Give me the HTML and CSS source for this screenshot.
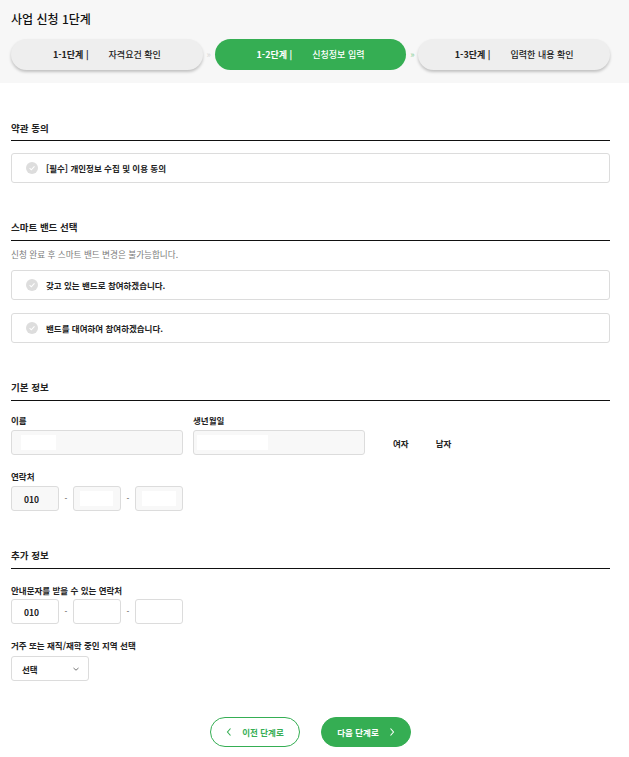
FILE: index.html
```html
<!DOCTYPE html>
<html lang="ko">
<head>
  <meta charset="UTF-8" />
  <meta name="viewport" content="width=device-width, initial-scale=1" />
  <title>사업 신청 1단계</title>
  <link rel="stylesheet" href="styles.css">
</head>
<body>
  <!-- Header with step indicator -->
  <header class="page-head">
    <h1>사업 신청 1단계</h1>
    <ol class="steps">
      <li class="step"><b>1-1단계 |</b><span>자격요건 확인</span></li>
      <li class="step-arrow">»</li>
      <li class="step active"><b>1-2단계 |</b><span>신청정보 입력</span></li>
      <li class="step-arrow on">»</li>
      <li class="step"><b>1-3단계 |</b><span>입력한 내용 확인</span></li>
    </ol>
  </header>

  <main class="content">
    <!-- 약관 동의 -->
    <section class="block">
      <h2>약관 동의</h2>
      <label class="check-box first">
        <span class="check-icon"><svg viewBox="0 0 12 12"><path d="M3.6 6.2l1.7 1.6 3.2-3.4" /></svg></span>
        [필수] 개인정보 수집 및 이용 동의
      </label>
    </section>

    <!-- 스마트 밴드 선택 -->
    <section class="block">
      <h2>스마트 밴드 선택</h2>
      <p class="note">신청 완료 후 스마트 밴드 변경은 불가능합니다.</p>
      <label class="check-box">
        <span class="check-icon"><svg viewBox="0 0 12 12"><path d="M3.6 6.2l1.7 1.6 3.2-3.4" /></svg></span>
        갖고 있는 밴드로 참여하겠습니다.
      </label>
      <label class="check-box">
        <span class="check-icon"><svg viewBox="0 0 12 12"><path d="M3.6 6.2l1.7 1.6 3.2-3.4" /></svg></span>
        밴드를 대여하여 참여하겠습니다.
      </label>
    </section>

    <!-- 기본 정보 -->
    <section class="block">
      <h2>기본 정보</h2>
      <div class="row">
        <div class="field">
          <div class="label">이름</div>
          <div class="input wide filled"><span class="mask" style="width:35px"></span></div>
        </div>
        <div class="field">
          <div class="label">생년월일</div>
          <div class="input wide filled tight-left"><span class="mask" style="width:71px"></span></div>
        </div>
        <div class="gender">
          <span>여자</span>
          <span>남자</span>
        </div>
      </div>
      <div class="label">연락처</div>
      <div class="phone">
        <div class="input small filled">010</div>
        <span class="dash">-</span>
        <div class="input small filled"><span class="mask" style="width:33px"></span></div>
        <span class="dash">-</span>
        <div class="input small filled"><span class="mask" style="width:34px"></span></div>
      </div>
    </section>

    <!-- 추가 정보 -->
    <section class="block">
      <h2>추가 정보</h2>
      <div class="label">안내문자를 받을 수 있는 연락처</div>
      <div class="phone tight">
        <div class="input small">010</div>
        <span class="dash">-</span>
        <div class="input small"></div>
        <span class="dash">-</span>
        <div class="input small"></div>
      </div>
      <div class="label">거주 또는 재직/재학 중인 지역 선택</div>
      <div class="select">
        선택
        <svg viewBox="0 0 8 6"><path d="M1.5 2l2.5 2.2 2.5-2.2" /></svg>
      </div>
    </section>

    <div class="actions">
      <button class="btn prev"><svg viewBox="0 0 6 10"><path d="M4.5 1.5L1.5 5l3 3.5" /></svg>이전 단계로</button>
      <button class="btn next">다음 단계로<svg viewBox="0 0 6 10"><path d="M1.5 1.5L4.5 5l-3 3.5" /></svg></button>
    </div>
  </main>
</body>
</html>
```

FILE: styles.css
```css
* {
  box-sizing: border-box;
}
body {
  margin: 0;
  font-family: 'Noto Sans CJK KR', 'Noto Sans', sans-serif;
  color: #222;
  background: #fff;
}

/* Header */
.page-head {
  background: #f7f7f7;
  padding: 10px 19px 13px 11px;
}
h1 {
  margin: 0;
  font-size: 12px;
  line-height: 18px;
  font-weight: 500;
  color: #111;
}
.steps {
  list-style: none;
  margin: 11px 0 0;
  padding: 0;
  display: flex;
  align-items: center;
}
.step {
  flex: 1;
  height: 31px;
  border-radius: 16px;
  background: #eeeeee;
  box-shadow: 0 2px 3px rgba(0, 0, 0, 0.22);
  display: flex;
  justify-content: center;
  align-items: center;
  font-size: 9px;
  color: #222;
}
.step b {
  font-weight: 700;
  margin-right: 20px;
}
.step span {
  font-weight: 500;
}
.step.active {
  background: #35ae53;
  color: #fff;
  box-shadow: none;
}
.step-arrow {
  width: 12px;
  text-align: center;
  font-size: 9px;
  color: #d6d6d6;
}
.step-arrow.on {
  color: #8ccf9a;
}

/* Content */
.content {
  padding: 0 19px 40px 11px;
}
.block {
  margin-top: 37px;
}
.block:first-child {
  margin-top: 38px;
}
h2 {
  margin: 0;
  font-size: 9.5px;
  line-height: 14px;
  font-weight: 700;
  padding-bottom: 6px;
  border-bottom: 1px solid #111;
}
.block:first-child h2 {
  padding-bottom: 5px;
}
.note {
  margin: 7px 0 0;
  font-size: 8.6px;
  line-height: 12px;
  color: #7a7a7a;
}

/* Checkbox rows */
.check-box {
  display: flex;
  align-items: center;
  height: 30px;
  margin-top: 13px;
  padding-left: 14px;
  border: 1px solid #dcdcdc;
  border-radius: 3px;
  font-size: 8.5px;
  font-weight: 700;
  color: #222;
}
.check-box.first {
  margin-top: 12px;
}
.note + .check-box {
  margin-top: 10px;
}
.check-icon {
  width: 12px;
  height: 12px;
  border-radius: 50%;
  background: #dddddd;
  margin-right: 8px;
  display: flex;
}
.check-icon svg {
  width: 12px;
  height: 12px;
  fill: none;
  stroke: #fff;
  stroke-width: 1.1;
}

/* Form fields */
.row {
  display: flex;
  align-items: flex-end;
}
.field {
  width: 172px;
  margin-right: 10px;
}
.label {
  margin-top: 15px;
  font-size: 8.5px;
  line-height: 12px;
  font-weight: 700;
  color: #222;
}
.row .label {
  margin-top: 13px;
}
.input {
  height: 25px;
  margin-top: 4px;
  border: 1px solid #dcdcdc;
  border-radius: 3px;
  background: #fff;
  display: flex;
  align-items: center;
  font-size: 8.5px;
  font-weight: 700;
}
.input.filled {
  background: #f8f8f8;
}
.input.wide {
  width: 172px;
  padding-left: 9px;
}
.input.wide.tight-left {
  padding-left: 3px;
}
.input.small {
  width: 48px;
  padding-left: 12px;
}
.phone .input.small .mask {
  margin-left: -6px;
}
.mask {
  display: block;
  height: 15px;
  background: #fff;
}
.gender {
  display: flex;
  height: 25px;
  align-items: center;
  margin-left: 18px;
  font-size: 8.5px;
  font-weight: 700;
}
.gender span {
  margin-right: 27px;
}
.phone {
  display: flex;
  align-items: center;
}
.phone.tight .input {
  margin-top: 3px;
}
.phone .input {
  margin-top: 4px;
}
.dash {
  width: 14px;
  text-align: center;
  font-size: 8px;
  color: #444;
  padding-top: 3px;
}
.select {
  width: 78px;
  height: 25px;
  margin-top: 5px;
  border: 1px solid #dcdcdc;
  border-radius: 3px;
  display: flex;
  align-items: center;
  justify-content: space-between;
  padding: 0 8px 0 10px;
  font-size: 8.5px;
  font-weight: 700;
}
.select svg {
  width: 8px;
  height: 6px;
  fill: none;
  stroke: #666;
  stroke-width: 0.9;
}

/* Bottom buttons */
.actions {
  display: flex;
  justify-content: center;
  gap: 21px;
  margin-top: 36px;
}
.btn {
  width: 90px;
  height: 30px;
  border-radius: 15px;
  font-family: inherit;
  font-size: 8.5px;
  font-weight: 700;
  display: flex;
  align-items: center;
  justify-content: center;
  cursor: pointer;
}
.btn svg {
  width: 6px;
  height: 10px;
  fill: none;
  stroke-width: 1.1;
}
.btn.prev {
  background: #fff;
  border: 1px solid #35ae53;
  color: #35ae53;
}
.btn.prev svg {
  stroke: #35ae53;
  margin-right: 10px;
}
.btn.next {
  background: #35ae53;
  border: 1px solid #35ae53;
  color: #fff;
}
.btn.next svg {
  stroke: #fff;
  margin-left: 10px;
}
```
